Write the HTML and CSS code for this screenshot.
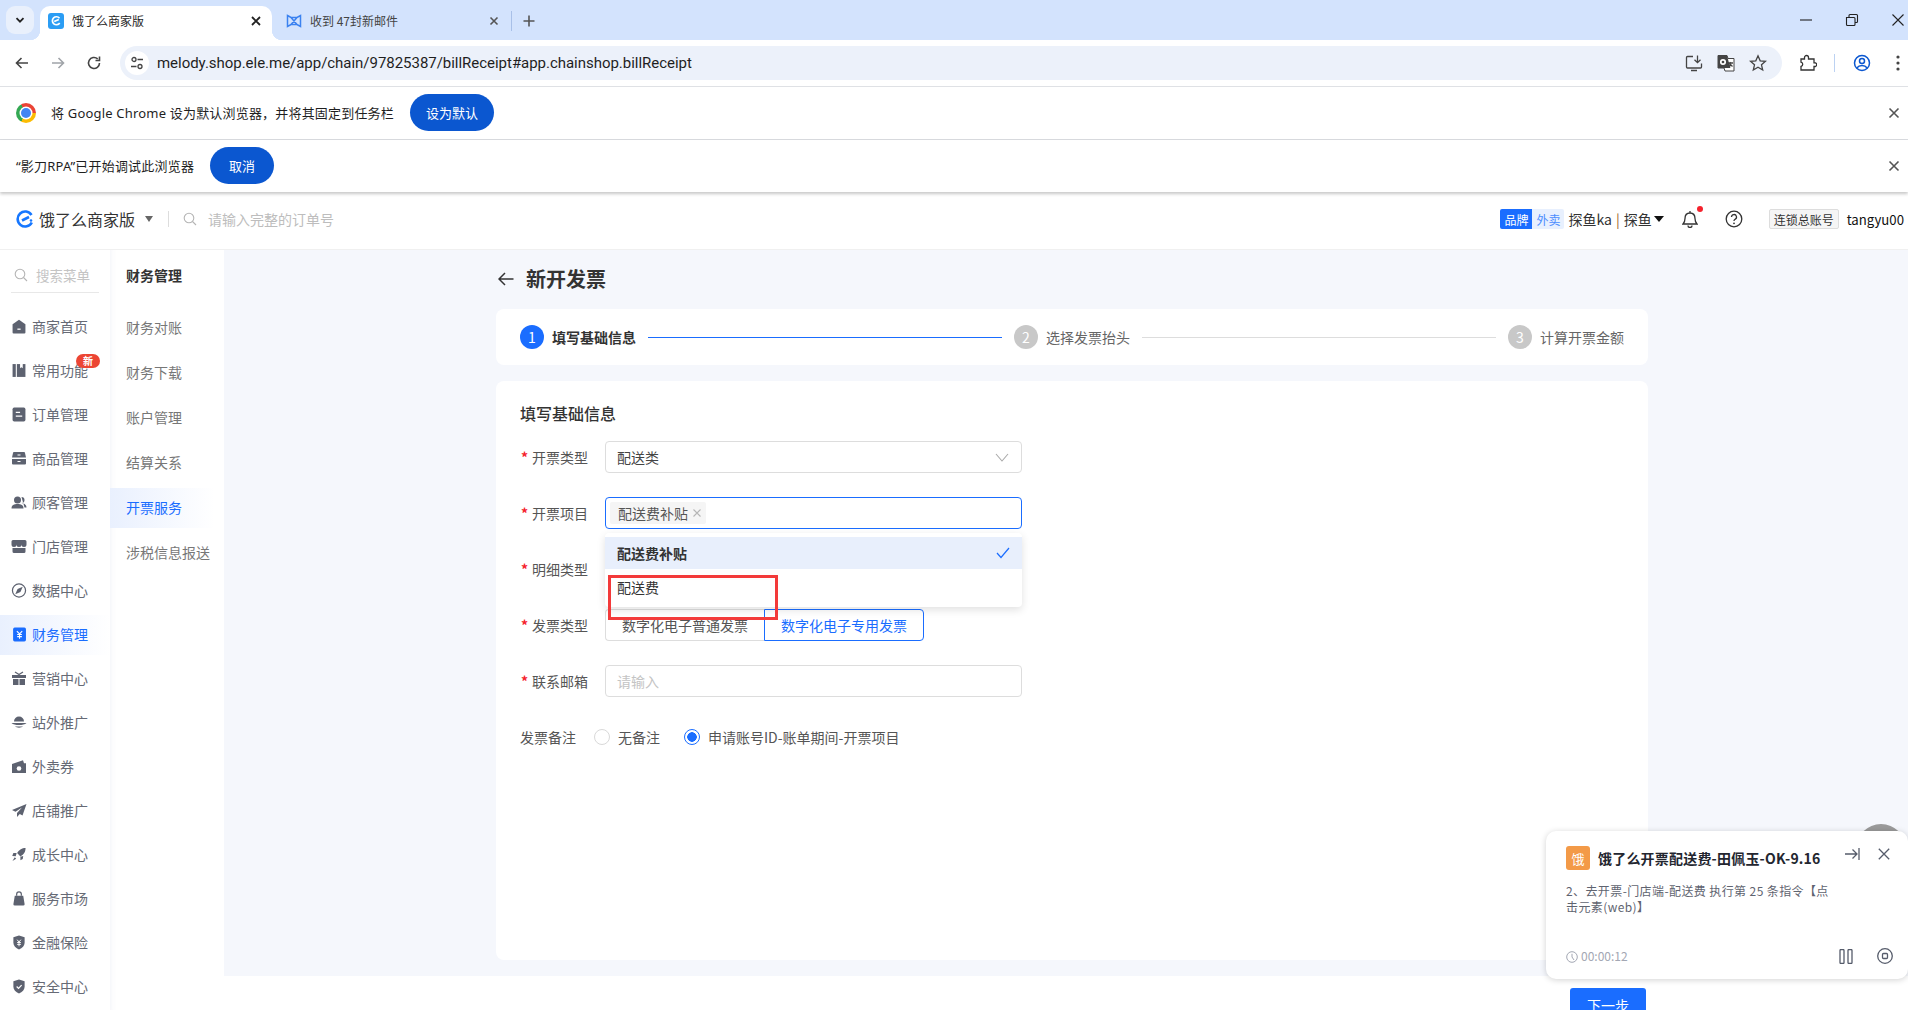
FILE: index.html
```html
<!DOCTYPE html>
<html lang="zh-CN">
<head>
<meta charset="utf-8">
<title>饿了么商家版</title>
<link rel="stylesheet" href="styles.css">
</head>
<body>
<div class="page">
  <div class="tabstrip">
    <div class="tab-menu"><svg width="12" height="12" viewBox="0 0 12 12"><path d="M2.5 4.2 6 7.7l3.5-3.5" class="i-dark2"/></svg></div>
    <div class="tab tab-active">
      <svg class="tab-ic" width="16" height="16" viewBox="0 0 16 16"><rect width="16" height="16" rx="3" fill="#2b9df4"/><path d="M11.5 5.2A4 4 0 1 0 11.7 10" class="i-white"/><path d="M6.2 8.6 10.8 6.4" class="i-white"/></svg>
      <span class="tab-title">饿了么商家版</span>
      <svg class="tab-x" width="12" height="12" viewBox="0 0 12 12"><path d="M2 2l8 8M10 2l-8 8" class="i-dark2"/></svg>
    </div>
    <div class="tab">
      <svg class="tab-ic" width="16" height="16" viewBox="0 0 16 16"><path d="M1.5 2.5 5 4.5 11 4.5 14.500 2.500V13.500L11 11.500H5L1.500 13.500ZM5 4.500 11 11.500M11 4.500 5 11.500" fill="none" stroke="#3b82f0" stroke-width="1.500"/></svg>
      <span class="tab-title tab-title-dim">收到 47封新邮件</span>
      <svg class="tab-x" width="12" height="12" viewBox="0 0 12 12"><path d="M2.500 2.500l7 7M9.500 2.500l-7 7" class="i-gray"/></svg>
    </div>
    <div class="tab-sep"></div>
    <svg class="tab-plus" width="14" height="14" viewBox="0 0 14 14"><path d="M7 1.500v11M1.500 7h11" class="i-gray"/></svg>
    <div class="win-ctrls">
      <svg width="14" height="14" viewBox="0 0 14 14"><path d="M1 7h12" class="i-thin"/></svg>
      <svg width="14" height="14" viewBox="0 0 14 14"><path d="M1.500 4.500h7.500a1 1 0 0 1 1 1v6a1 1 0 0 1-1 1H2.500a1 1 0 0 1-1-1ZM4 4.500V2.500a1 1 0 0 1 1-1h6.500a1 1 0 0 1 1 1v6a1 1 0 0 1-1 1H10" class="i-thin"/></svg>
      <svg width="14" height="14" viewBox="0 0 14 14"><path d="M1.500 1.500l11 11M12.500 1.500l-11 11" class="i-thin"/></svg>
    </div>
  </div>

  <div class="toolbar">
    <svg class="nav-ic" width="16" height="16" viewBox="0 0 16 16"><path d="M14 8H2.500M7.500 3 2.500 8l5 5" class="i-nav"/></svg>
    <svg class="nav-ic nav-off" width="16" height="16" viewBox="0 0 16 16"><path d="M2 8h11.500M8.500 3l5 5-5 5" class="i-nav"/></svg>
    <svg class="nav-ic" width="16" height="16" viewBox="0 0 16 16"><path d="M13.500 8A5.500 5.500 0 1 1 11.700 3.900M13.500 1.500V5.500H9.500" class="i-nav"/></svg>
    <div class="omnibox">
      <div class="site-ic"><svg width="14" height="14" viewBox="0 0 14 14"><circle cx="4" cy="3.500" r="2" class="i-dark1"/><path d="M7.500 3.500H13M1 10.500H6.500" class="i-dark1"/><circle cx="10" cy="10.500" r="2" class="i-dark1"/></svg></div>
      <span class="url">melody.shop.ele.me/app/chain/97825387/billReceipt#app.chainshop.billReceipt</span>
      <div class="omni-icons">
        <svg width="18" height="18" viewBox="0 0 18 18"><path d="M8 2.500H2.500a1 1 0 0 0-1 1V13a1 1 0 0 0 1 1h13a1 1 0 0 0 1-1V9.500M6 16.500h6M12.500 1.500v7M9.500 5.700l3 3 3-3" class="i-dark1"/></svg>
        <svg width="18" height="18" viewBox="0 0 18 18"><path d="M1 1.500h9l1 3h6v12.500H8l-1-3H1Z" fill="#fff" stroke="#444" stroke-width="1"/><path d="M1 1.500h9l3.300 12.500H1Z" fill="#444"/><circle cx="6" cy="8" r="2.200" class="i-white"/><path d="M11 9h5M13.500 8l-1 5M12.500 9.500l3 3" class="i-dark1"/></svg>
        <svg width="18" height="18" viewBox="0 0 18 18"><path d="M9 1.800 11.200 6.800 16.500 7.300 12.500 10.800 13.700 16 9 13.300 4.300 16 5.500 10.800 1.500 7.300 6.800 6.800Z" class="i-dark1"/></svg>
      </div>
    </div>
    <svg class="ext-ic" width="18" height="18" viewBox="0 0 18 18"><path d="M2 5.500h3.500V4a2 2 0 0 1 4 0v1.500H15v3.800h1.500a2 2 0 0 1 0 3.700H15v3.500H2v-3.500a2.200 2.200 0 0 0 0-4.300Z" class="i-dark2b" transform="translate(0 -.5)"/></svg>
    <div class="tool-sep"></div>
    <svg class="profile-ic" width="18" height="18" viewBox="0 0 18 18"><circle cx="9" cy="9" r="7.500" class="i-blue"/><circle cx="9" cy="7" r="2.500" class="i-blue"/><path d="M3.800 14c1.500-2 3-2.500 5.200-2.500s3.700.5 5.200 2.500" class="i-blue"/></svg>
    <svg class="more-ic" width="4" height="16" viewBox="0 0 4 16"><circle cx="2" cy="2" r="1.600" fill="#444"/><circle cx="2" cy="8" r="1.600" fill="#444"/><circle cx="2" cy="14" r="1.600" fill="#444"/></svg>
  </div>

  <div class="infobar infobar-first">
    <div class="chrome-logo"><span class="chrome-core"></span></div>
    <span class="info-text">将 Google Chrome 设为默认浏览器，并将其固定到任务栏</span>
    <button class="info-btn info-btn-wide">设为默认</button>
    <svg class="info-x" width="12" height="12" viewBox="0 0 12 12"><path d="M1.500 1.500l9 9M10.500 1.500l-9 9" class="i-gray"/></svg>
  </div>
  <div class="infobar infobar-second">
    <span class="info-text">“影刀RPA”已开始调试此浏览器</span>
    <button class="info-btn info-btn-narrow">取消</button>
    <svg class="info-x" width="12" height="12" viewBox="0 0 12 12"><path d="M1.500 1.500l9 9M10.500 1.500l-9 9" class="i-gray"/></svg>
  </div>

  <header class="apphead">
    <svg class="brand-ic" width="18" height="18" viewBox="0 0 18 18"><path d="M15.500 5A7.500 7.500 0 1 0 15.800 12.500" fill="none" stroke="#1677ff" stroke-width="2.600"/><path d="M6 10.500 13 7" stroke="#1677ff" stroke-width="2.600" fill="none"/><circle cx="15" cy="10.500" r="1.300" fill="#1677ff"/></svg>
    <span class="brand">饿了么商家版</span>
    <span class="caret-gray"></span>
    <span class="head-sep"></span>
    <svg class="head-search" width="14" height="14" viewBox="0 0 14 14"><circle cx="6" cy="6" r="4.800" class="i-light"/><path d="M9.500 9.500l3.500 3.500" class="i-light"/></svg>
    <span class="head-ph">请输入完整的订单号</span>
    <div class="head-right">
      <span class="tag-blue">品牌</span><span class="tag-light">外卖</span>
      <span class="shop">探鱼ka<i class="shop-bar">|</i>探鱼</span>
      <span class="caret-black"></span>
      <div class="bell">
        <svg width="16" height="18" viewBox="0 0 16 18"><path d="M1 14h14c-1.500-1.500-2-3-2-5.500C13 5 11 3 8 3S3 5 3 8.500C3 11 2.500 12.500 1 14ZM6 15.500a2 2 0 0 0 4 0M8 1v2" class="i-dark2b"/></svg>
        <span class="bell-dot"></span>
      </div>
      <svg class="help" width="18" height="18" viewBox="0 0 18 18"><circle cx="9" cy="9" r="7.800" class="i-dark2b"/><path d="M6.500 7A2.500 2.500 0 1 1 10 9.300c-.7.400-1 .8-1 1.700" class="i-dark2b"/><circle cx="9" cy="13.300" r=".9" fill="#333"/></svg>
      <span class="acct-tag">连锁总账号</span>
      <span class="user">tangyu00</span>
    </div>
  </header>

  <div class="appbody">
    <nav class="side">
      <div class="side-search">
        <svg width="14" height="14" viewBox="0 0 14 14"><circle cx="6" cy="6" r="4.800" class="i-light"/><path d="M9.500 9.500l3.500 3.500" class="i-light"/></svg>
        <span>搜索菜单</span>
      </div>
      <ul class="menu">
        <li class="menu-item"><svg viewBox="0 0 14 14"><path d="M1 5 7 .8 13 5v7.500a1 1 0 0 1-1 1H2a1 1 0 0 1-1-1Z" class="f"/><path d="M5.500 9.500h3" stroke="#fff" stroke-width="1.200"/></svg>商家首页</li>
        <li class="menu-item"><svg viewBox="0 0 14 14"><rect x="1" y="1" width="3" height="12" class="f"/><path d="M5 1h8v12H5Z" class="f"/><path d="M8 1h2.500v4L9.200 4 8 5Z" fill="#fff"/></svg>常用功能<b class="badge">新</b></li>
        <li class="menu-item"><svg viewBox="0 0 14 14"><rect x="1" y="0.500" width="12" height="13" rx="1.500" class="f"/><path d="M4 5h4M4 8.500h6" stroke="#fff" stroke-width="1.200"/></svg>订单管理</li>
        <li class="menu-item"><svg viewBox="0 0 16 14"><path d="M2 1.500a1 1 0 0 1 1-1h10a1 1 0 0 1 1 1L15 6H1ZM1 7.500h14V12a1 1 0 0 1-1 1H2a1 1 0 0 1-1-1Z" class="f"/><path d="M6.500 3.500h3M6.500 10h3" stroke="#fff" stroke-width="1.200"/></svg>商品管理</li>
        <li class="menu-item"><svg viewBox="0 0 16 14"><circle cx="6.500" cy="4.500" r="3.500" class="f"/><path d="M0.500 13c0-3.500 2.500-4.500 6-4.500s6 1 6 4.500Z" class="f"/><path d="M10.500 1.500a3 3 0 0 1 0 6c2.500.5 5 1.500 5 4.500h-2" class="f"/></svg>顾客管理</li>
        <li class="menu-item"><svg viewBox="0 0 16 14"><path d="M2 .5h12a1.500 1.500 0 0 1 1.500 1.500v3a2.500 2.500 0 0 1-5 0 2.500 2.500 0 0 1-5 0 2.500 2.500 0 0 1-5 0V2A1.500 1.500 0 0 1 2 .5ZM1.500 8.500h13v3.500a1.500 1.500 0 0 1-1.500 1.500H3A1.500 1.500 0 0 1 1.500 12Z" class="f"/></svg>门店管理</li>
        <li class="menu-item"><svg viewBox="0 0 16 16"><circle cx="8" cy="8" r="7" class="o"/><path d="M12 4 9.500 9.500 4 12 6.500 6.500Z" class="f"/></svg>数据中心</li>
        <li class="menu-item menu-active"><svg viewBox="0 0 14 14"><rect x="1.500" y="0.500" width="12" height="13" rx="1.500" fill="#1a6dff"/><path d="M5 3.800 7.500 6.500 10 3.800M5.300 7h4.400M5.300 9h4.400M7.500 6.500v4.500" stroke="#fff" stroke-width="1" fill="none"/></svg>财务管理</li>
        <li class="menu-item"><svg viewBox="0 0 16 14"><path d="M1 3.500h14v3H1ZM2 7.500h5.500v6H2ZM8.500 7.500H14v6H8.500Z" class="f"/><path d="M4 .5 8 3 12 .5" class="o"/></svg>营销中心</li>
        <li class="menu-item"><svg viewBox="0 0 16 14"><path d="M3 6a5 5 0 0 1 10 0Z" class="f"/><path d="M.5 7.500h15C14 9 11.500 9.500 8 9.500S2 9 .5 7.500ZM4 11c2 1.500 6 1.500 8 0Z" class="f"/></svg>站外推广</li>
        <li class="menu-item"><svg viewBox="0 0 16 14"><path d="M1 4.500 12 .8l1 3H15v9.700H1Z" class="f"/><circle cx="8" cy="9" r="2.300" fill="#fff"/></svg>外卖券</li>
        <li class="menu-item"><svg viewBox="0 0 16 14"><path d="M15.500 .5 1 6.500l3.500 1.800L11 4 6 9.500V13.500l2.800-3 2.700 1.500Z" class="f"/></svg>店铺推广</li>
        <li class="menu-item"><svg viewBox="0 0 16 16"><path d="M15 1c-4 0-6.500 1.500-9 5.500l3.500 3.500c4-2.500 5.500-5 5.500-9ZM5.500 6.500H2L.8 9.500 4.500 9.800ZM9.500 10.500v3.500l2.500-1.200.5-3.300ZM3.500 11 1 15l4-2.500Z" class="f"/></svg>成长中心</li>
        <li class="menu-item"><svg viewBox="0 0 14 16"><path d="M2.500 5h9L13 14a1.500 1.500 0 0 1-1.500 1.500h-9A1.500 1.500 0 0 1 1 14Z" class="f"/><path d="M4.500 5V3.500a2.500 2.500 0 0 1 5 0V5" class="o"/></svg>服务市场</li>
        <li class="menu-item"><svg viewBox="0 0 14 16"><path d="M7 .5 13 2.500V8c0 3.500-2.500 6-6 7.500C3.500 14 1 11.500 1 8V2.500Z" class="f"/><path d="M5 5l2 2.500L9 5M5 8h4M5 10h4M7 7.500V12" stroke="#fff" stroke-width="1" fill="none"/></svg>金融保险</li>
        <li class="menu-item"><svg viewBox="0 0 14 16"><path d="M7 .5 13 2.500V8c0 3.500-2.500 6-6 7.500C3.500 14 1 11.500 1 8V2.500Z" class="f"/><path d="M4.500 8 6.500 10 9.800 6.500" stroke="#fff" stroke-width="1.300" fill="none"/></svg>安全中心</li>
      </ul>
    </nav>

    <aside class="subside">
      <div class="sub-title">财务管理</div>
      <ul class="submenu">
        <li class="sub-item">财务对账</li>
        <li class="sub-item">财务下载</li>
        <li class="sub-item">账户管理</li>
        <li class="sub-item">结算关系</li>
        <li class="sub-item sub-active">开票服务</li>
        <li class="sub-item">涉税信息报送</li>
      </ul>
    </aside>

    <div class="workspace">
      <main class="main">
        <div class="page-title">
          <svg width="16" height="14" viewBox="0 0 16 14"><path d="M15.500 7H1M7 1 1 7l6 6" class="i-title"/></svg>
          <h1>新开发票</h1>
        </div>
        <section class="steps">
          <span class="step-no step-on">1</span>
          <span class="step-name step-name-on">填写基础信息</span>
          <span class="step-line step-line-on"></span>
          <span class="step-no">2</span>
          <span class="step-name">选择发票抬头</span>
          <span class="step-line"></span>
          <span class="step-no">3</span>
          <span class="step-name">计算开票金额</span>
        </section>
        <section class="form-card">
          <h2>填写基础信息</h2>
          <div class="row">
            <label class="lab"><i>*</i>开票类型</label>
            <div class="ctl ctl-select">配送类
              <svg class="chev" width="14" height="9" viewBox="0 0 14 9"><path d="M1 1l6 7 6-7" class="i-chev"/></svg>
            </div>
          </div>
          <div class="row">
            <label class="lab"><i>*</i>开票项目</label>
            <div class="ctl ctl-focus">
              <span class="chip">配送费补贴
                <svg width="8" height="8" viewBox="0 0 8 8"><path d="M.5.500l7 7M7.500.500l-7 7" class="i-light"/></svg>
              </span>
              <div class="dropdown">
                <div class="dd-item dd-on">配送费补贴
                  <svg width="14" height="12" viewBox="0 0 14 12"><path d="M1 6l4 4.500L13 1" class="i-check"/></svg>
                </div>
                <div class="dd-item dd-plain">配送费</div>
              </div>
            </div>
          </div>
          <div class="row">
            <label class="lab"><i>*</i>明细类型</label>
          </div>
          <div class="row">
            <label class="lab"><i>*</i>发票类型</label>
            <div class="seg">
              <span class="seg-item">数字化电子普通发票</span>
              <span class="seg-item seg-on">数字化电子专用发票</span>
            </div>
          </div>
          <div class="row">
            <label class="lab"><i>*</i>联系邮箱</label>
            <div class="ctl ctl-ph">请输入</div>
          </div>
          <div class="row">
            <label class="lab lab-plain">发票备注</label>
            <div class="radios">
              <span class="radio"></span><span class="radio-text">无备注</span>
              <span class="radio radio-on"></span><span class="radio-text">申请账号ID-账单期间-开票项目</span>
            </div>
          </div>
        </section>
      </main>
      <footer class="foot"><button class="next">下一步</button></footer>
    </div>
  </div>

  <div class="redbox"></div>
  <div class="gray-ball"></div>
  <aside class="rpa">
    <div class="rpa-head">
      <span class="rpa-logo">饿</span>
      <strong>饿了么开票配送费-田佩玉-OK-9.16</strong>
      <svg class="rpa-collapse" width="16" height="14" viewBox="0 0 16 14"><path d="M1 7h12M8.500 2.500 13 7l-4.500 4.500M15 1v12" class="i-rpa"/></svg>
      <svg class="rpa-close" width="12" height="12" viewBox="0 0 12 12"><path d="M.8.800l10.400 10.400M11.200.800.800 11.200" class="i-rpa"/></svg>
    </div>
    <p class="rpa-desc">2、去开票-门店端-配送费 执行第 25 条指令【点击元素(web)】</p>
    <div class="rpa-foot">
      <svg width="12" height="12" viewBox="0 0 12 12"><circle cx="6" cy="6" r="5.300" class="i-time"/><path d="M6 2.800V6l2 3" class="i-time"/></svg>
      <span class="rpa-time">00:00:12</span>
      <svg class="rpa-pause" width="14" height="15" viewBox="0 0 14 15"><rect x="1" y=".5" width="4" height="14" rx="1" class="i-rpa"/><rect x="9" y=".5" width="4" height="14" rx="1" class="i-rpa"/></svg>
      <svg class="rpa-stop" width="16" height="16" viewBox="0 0 16 16"><circle cx="8" cy="8" r="7.300" class="i-rpa"/><rect x="5.500" y="5.500" width="5" height="5" rx="1" class="i-rpa"/></svg>
    </div>
  </aside>
</div>
</body>
</html>
```
FILE: styles.css
```css
* { box-sizing: border-box; }
html, body { margin: 0; height: 100%; overflow: hidden; background: #fff; }
body { font-family: "Noto Sans CJK SC", "Noto Sans", sans-serif; font-size: 14px; color: #333; }
ul { list-style: none; margin: 0; padding: 0; }
h1, h2, p { margin: 0; }
button { font-family: inherit; border: 0; cursor: pointer; }
i { font-style: normal; }

.i-dark2 { fill: none; stroke: #222; stroke-width: 1.800; }
.i-dark1 { fill: none; stroke: #444; stroke-width: 1.300; }
.i-dark2b { fill: none; stroke: #333; stroke-width: 1.300; }
.i-white { fill: none; stroke: #fff; stroke-width: 1.700; }
.i-gray { fill: none; stroke: #555; stroke-width: 1.600; }
.i-thin { fill: none; stroke: #222; stroke-width: 1.100; }
.i-nav { fill: none; stroke: currentColor; stroke-width: 1.600; }
.i-blue { fill: none; stroke: #0b57d0; stroke-width: 1.500; }
.i-light { fill: none; stroke: #b5b5b5; stroke-width: 1.100; }
.i-title { fill: none; stroke: #333; stroke-width: 1.500; }
.i-chev { fill: none; stroke: #aaa; stroke-width: 1.100; }
.i-check { fill: none; stroke: #1a6dff; stroke-width: 1.200; }
.i-rpa { fill: none; stroke: #565c6b; stroke-width: 1.300; }
.i-time { fill: none; stroke: #a3a7b3; stroke-width: 1; }

.page { position: relative; width: 1908px; height: 1010px; display: flex; flex-direction: column; overflow: hidden; }

/* browser chrome */
.tabstrip { height: 40px; flex: none; background: #d3e3fd; display: flex; align-items: flex-end; padding-left: 6px; position: relative; }
.tab-menu { width: 28px; height: 28px; margin-bottom: 6px; border-radius: 9px; background: #e9f0fc; display: flex; align-items: center; justify-content: center; }
.tab { width: 232px; height: 34px; margin-left: 6px; padding: 0 10px 5px 8px; border-radius: 10px 10px 0 0; display: flex; align-items: center; position: relative; }
.tab + .tab { margin-left: 0; padding-left: 14px; padding-right: 4px; }
.tab-active { background: #fff; }
.tab-active::before, .tab-active::after { content: ""; position: absolute; bottom: 0; width: 10px; height: 10px; }
.tab-active::before { left: -10px; background: radial-gradient(circle at 0 0, transparent 10px, #fff 10.500px); }
.tab-active::after { right: -10px; background: radial-gradient(circle at 100% 0, transparent 10px, #fff 10.500px); }
.tab-ic { flex: none; margin-right: 8px; }
.tab-title { font-size: 12px; color: #1f1f1f; flex: 1; white-space: nowrap; }
.tab-title-dim { color: #444; }
.tab-x { flex: none; }
.tab-sep { width: 1px; height: 20px; background: #a8c0e8; margin: 0 0 9px 7px; }
.tab-plus { margin: 0 0 12px 10px; }
.win-ctrls { margin-left: auto; display: flex; gap: 32px; padding-right: 3px; height: 40px; padding-top: 13px; }

.toolbar { height: 47px; flex: none; border-bottom: 1px solid #dfe1e5; display: flex; align-items: center; padding: 0 8px 0 14px; color: #444; }
.nav-ic { flex: none; margin-right: 20px; }
.nav-off { color: #a0a4a9; }
.nav-ic:nth-child(3) { margin-right: 18px; }
.omnibox { width: 1662px; height: 34px; border-radius: 17px; background: #ecf1fa; display: flex; align-items: center; padding: 0 15px 0 5px; }
.site-ic { width: 24px; height: 24px; border-radius: 50%; background: #fff; display: flex; align-items: center; justify-content: center; margin-right: 8px; }
.url { font-family: Roboto, "Noto Sans", sans-serif; font-size: 15px; letter-spacing: -.03px; color: #1f1f1f; white-space: nowrap; }
.omni-icons { margin-left: auto; display: flex; gap: 14px; }
.ext-ic { flex: none; margin-left: 17px; }
.tool-sep { width: 1px; height: 18px; background: #bcd2f2; margin-left: 17px; }
.profile-ic { flex: none; margin-left: 18px; }
.more-ic { flex: none; margin-left: 25px; }

.infobar { flex: none; display: flex; align-items: center; position: relative; background: #fff; padding-bottom: 1px; }
.infobar-first { height: 53px; padding-left: 16px; border-bottom: 1px solid #dadce0; }
.infobar-second { height: 52px; padding-left: 16px; box-shadow: 0 2px 3px rgba(0,0,0,.22); z-index: 2; }
.chrome-logo { width: 20px; height: 20px; border-radius: 50%; flex: none; margin-right: 15px; background: conic-gradient(from -30deg, #ea4335 0 120deg, #fbbc04 120deg 240deg, #34a853 240deg); display: flex; align-items: center; justify-content: center; }
.chrome-core { width: 10px; height: 10px; border-radius: 50%; background: #4285f4; box-shadow: 0 0 0 1.500px #fff; }
.info-text { font-family: "Noto Sans", "Noto Sans CJK SC", sans-serif; font-size: 13px; letter-spacing: .19px; color: #1f1f1f; white-space: nowrap; }
.info-btn { height: 37px; border-radius: 19px; background: #0b57d0; color: #fff; font-size: 13px; margin-left: 16px; }
.info-btn-wide { width: 84px; }
.info-btn-narrow { width: 64px; }
.info-x { position: absolute; right: 8px; top: 50%; margin-top: -6px; }

/* merchant header */
.apphead { height: 58px; flex: none; display: flex; align-items: center; padding: 0 0 3px 16px; border-bottom: 1px solid #f0f0f0; background: #fff; }
.brand-ic { flex: none; margin-right: 5px; }
.brand { font-size: 16px; color: #333; white-space: nowrap; }
.caret-gray { width: 0; height: 0; border: 4.500px solid transparent; border-top: 6px solid #666; border-bottom: 0; margin-left: 10px; }
.head-sep { width: 1px; height: 16px; background: #ddd; margin: 0 14px 0 15px; }
.head-search { flex: none; margin-right: 11px; }
.head-ph { font-size: 14px; color: #bdbdbd; }
.head-right { margin-left: auto; display: flex; align-items: center; }
.tag-blue, .tag-light { height: 20px; width: 32px; font-size: 12px; display: flex; align-items: center; justify-content: center; }
.tag-blue { background: #1a6dff; color: #fff; border-radius: 2px 0 0 2px; }
.tag-light { background: #e8f0fe; color: #4c8dff; border-radius: 0 2px 2px 0; }
.shop { margin-left: 4px; color: #333; white-space: nowrap; }
.shop-bar { margin: 0 4px; color: #a0651e; }
.caret-black { width: 0; height: 0; border: 5px solid transparent; border-top: 6px solid #111; border-bottom: 0; margin-left: 2px; }
.bell { position: relative; margin-left: 18px; height: 18px; }
.bell-dot { position: absolute; top: -4px; right: -5px; width: 6px; height: 6px; border-radius: 50%; background: #f5222d; }
.help { flex: none; margin-left: 27px; }
.acct-tag { margin-left: 26px; height: 20px; width: 70px; background: #f5f5f5; border: 1px solid #ddd; border-radius: 2px; font-size: 12px; color: #333; display: flex; align-items: center; justify-content: center; white-space: nowrap; }
.user { margin: 0 4px 0 8px; color: #111; font-size: 13.200px; }

/* app body */
.appbody { flex: 1; display: flex; min-height: 0; background: #f5f7fc; }
.side { width: 110px; flex: none; background: #fff; }
.side-search { margin: 0 11px; height: 43px; display: flex; align-items: flex-end; padding: 0 3px 7px 3px; gap: 8px; border-bottom: 1px solid #e8e8e8; font-size: 13.500px; color: #c4c4c4; white-space: nowrap; }
.side-search svg { margin-bottom: 3px; flex: none; }
.menu { margin-top: 14px; display: flex; flex-direction: column; gap: 4px; }
.menu-item { height: 40px; display: flex; align-items: center; padding: 0 0 2px 11px; color: #666a75; white-space: nowrap; position: relative; font-size: 14px; }
.menu-item svg { width: 16px; height: 15px; margin-right: 5px; flex: none; }
.f { fill: #5d6270; }
.o { fill: none; stroke: #5d6270; stroke-width: 1.300; }
.menu-active { background: linear-gradient(90deg, #e9f0fe, #fff); color: #1a6dff; }
.badge { position: absolute; left: 76px; top: 3px; width: 24px; height: 14px; border-radius: 7px; background: #ec4533; color: #fff; font-size: 10px; line-height: 14px; text-align: center; font-weight: 700; }

.subside { width: 114px; flex: none; background: #fff; box-shadow: inset 6px 0 6px -6px rgba(90,110,170,.1); }
.sub-title { height: 49px; padding-left: 16px; display: flex; align-items: center; font-weight: 700; color: #333; font-size: 14px; }
.submenu { margin-top: 9px; display: flex; flex-direction: column; gap: 5px; }
.sub-item { height: 40px; display: flex; align-items: center; padding: 0 0 2px 16px; color: #777; white-space: nowrap; }
.sub-active { background: linear-gradient(90deg, #e9f0fe, #fff 95%); color: #1a6dff; width: 110px; }

.workspace { flex: 1; display: flex; flex-direction: column; min-width: 0; }
.main { flex: 1; min-height: 0; display: flex; flex-direction: column; padding: 0 260px 16px 272px; }
.page-title { height: 30px; margin: 13px 0 16px; display: flex; align-items: center; gap: 12px; padding-left: 2px; }
.page-title svg { margin-top: 2px; }
.page-title h1 { font-size: 20px; font-weight: 700; color: #333; }
.steps { height: 56px; flex: none; background: #fff; border-radius: 8px; padding: 0 24px; display: flex; align-items: center; }
.step-no { width: 24px; height: 24px; border-radius: 50%; background: #c8c8c8; color: #fff; display: flex; align-items: center; justify-content: center; font-size: 14px; flex: none; }
.step-on { background: #1a6dff; }
.step-name { margin-left: 8px; color: #666; white-space: nowrap; }
.step-name-on { font-weight: 700; color: #333; }
.step-line { flex: 1; height: 1px; background: #ddd; margin: 0 12px; }
.step-line-on { background: #1a6dff; }

.form-card { flex: 1; margin-top: 16px; background: #fff; border-radius: 8px; padding: 20px 24px 0; }
.form-card h2 { font-size: 16px; font-weight: 500; color: #333; line-height: 24px; height: 24px; margin-bottom: 16px; }
.row { height: 32px; margin-bottom: 24px; display: flex; align-items: center; }
.lab { width: 85px; flex: none; padding-left: 1px; color: #555; white-space: nowrap; }
.lab i { color: #f5222d; margin-right: 4px; font-size: 14px; font-weight: 700; }
.lab-plain { width: 74px; padding-left: 0; }
.ctl { width: 417px; height: 32px; border: 1px solid #ddd; border-radius: 4px; padding: 0 11px; display: flex; align-items: center; position: relative; color: #444; }
.chev { margin-left: auto; margin-right: 1px; }
.ctl-focus { border-color: #1a6dff; padding-left: 4px; }
.chip { height: 22px; background: #f5f5f5; border-radius: 2px; padding: 0 5px 0 8px; display: flex; align-items: center; gap: 5px; color: #555; }
.ctl-ph { color: #c4c4c4; }
.dropdown { position: absolute; left: -1px; top: 35px; width: 417px; height: 74px; background: #fff; border-radius: 4px; box-shadow: 0 3px 8px rgba(0,0,0,.12); padding-top: 4px; z-index: 3; }
.dd-item { height: 32px; padding: 0 12px; display: flex; align-items: center; justify-content: space-between; color: #333; }
.dd-on { background: #e8effc; font-weight: 700; }
.dd-plain { padding-top: 3px; }
.dd-item svg { margin-right: 0; }
.seg { display: flex; height: 32px; }
.seg-item { width: 160px; display: flex; align-items: center; justify-content: center; border: 1px solid #ddd; border-right: 0; border-radius: 4px 0 0 4px; color: #555; white-space: nowrap; }
.seg-item:first-child { width: 159px; }
.seg-on { border: 1px solid #1a6dff; color: #1a6dff; border-radius: 0 4px 4px 0; }
.radios { display: flex; align-items: center; }
.radio { width: 16px; height: 16px; border: 1px solid #d9d9d9; border-radius: 50%; flex: none; }
.radio-on { border-color: #1a6dff; background: radial-gradient(circle, #1a6dff 4.500px, #fff 5px); margin-left: 24px; }
.radio-text { margin-left: 8px; color: #555; white-space: nowrap; }

.foot { height: 34px; flex: none; background: #fff; display: flex; justify-content: flex-end; padding-right: 262px; overflow: hidden; }
.next { width: 76px; height: 34px; margin-top: 12px; flex: none; background: #1a6dff; color: #fff; border-radius: 3px; font-size: 14px; }

/* overlays */
.redbox { position: absolute; left: 608px; top: 575px; width: 170px; height: 45px; border: 3px solid #f33a3a; z-index: 5; }
.gray-ball { position: absolute; left: 1856px; top: 824px; width: 50px; height: 50px; border-radius: 50%; background: #9a9a9a; }
.rpa { position: absolute; left: 1546px; top: 831px; width: 362px; height: 148px; background: #fff; border-radius: 10px; box-shadow: 0 1px 6px rgba(0,0,0,.18); padding: 15px 20px 0; z-index: 6; display: flex; flex-direction: column; }
.rpa-head { height: 24px; display: flex; align-items: center; }
.rpa-logo { width: 24px; height: 24px; border-radius: 3px; background: #f39a48; color: #fff; font-size: 13px; display: flex; align-items: center; justify-content: center; flex: none; }
.rpa-head strong { margin-left: 8px; font-size: 14px; letter-spacing: .2px; font-weight: 700; color: #23262f; white-space: nowrap; }
.rpa-collapse { margin-left: auto; margin-top: -8px; flex: none; }
.rpa-close { margin: -8px -2px 0 18px; flex: none; }
.rpa-desc { margin-top: 13px; width: 264px; font-size: 12px; letter-spacing: .4px; line-height: 16px; color: #5f6470; }
.rpa-foot { margin-top: auto; height: 34px; display: flex; align-items: flex-start; color: #a3a7b3; font-size: 12px; padding-top: 2px; }
.rpa-foot > svg:first-child { margin: 4px 3px 0 0; flex: none; }
.rpa-pause { margin: 2px 0 0 auto; flex: none; }
.rpa-stop { margin: 1px -5px 0 24px; flex: none; }
```
